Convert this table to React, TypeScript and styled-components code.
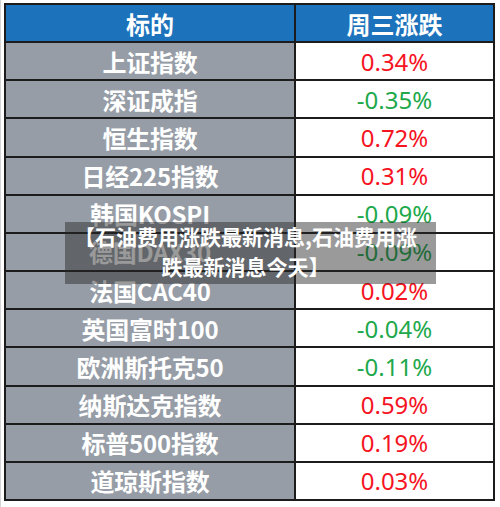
import React from "react";
import styled, { createGlobalStyle } from "styled-components";

const Global = createGlobalStyle`
  html, body { margin: 0; padding: 0; background: #ffffff; }
  body { font-family: "Noto Sans CJK SC", "Noto Sans", sans-serif; }
`;

const Page = styled.div`
  position: relative;
  width: 500px;
  height: 507px;
  padding: 3px 5px 6px 4px;
  box-sizing: border-box;
  background: #ffffff;
  border-left: 1px solid #d4d4d4;
`;

const Frame = styled.div`
  display: grid;
  grid-template-columns: 288px 1fr;
  grid-template-rows: repeat(13, 1fr);
  gap: 2px;
  padding: 2px;
  box-sizing: border-box;
  width: 491px;
  height: 498px;
  margin-left: -1px;
  background: #1c1c1c;
`;

const HeadCell = styled.div`
  background: #1d72bc;
  color: #ffffff;
  font-weight: 700;
  font-size: 24px;
  display: flex;
  align-items: center;
  justify-content: center;
`;

const NameCell = styled.div`
  background: #969da6;
  color: #ffffff;
  font-weight: 700;
  font-size: 24px;
  display: flex;
  align-items: center;
  justify-content: center;
  letter-spacing: -0.2px;
`;

const ValueCell = styled.div<{ $up: boolean }>`
  background: #ffffff;
  color: ${(p) => (p.$up ? "#f5141f" : "#20a84b")};
  font-family: "Noto Sans", "Noto Sans CJK SC", sans-serif;
  font-size: 24px;
  display: flex;
  align-items: center;
  justify-content: center;
`;

const Overlay = styled.div`
  position: absolute;
  left: 64px;
  top: 222px;
  width: 371px;
  height: 62px;
  box-sizing: border-box;
  padding-bottom: 5px;
  background: rgba(40, 40, 40, 0.47);
  color: #ffffff;
  font-weight: 700;
  font-size: 21px;
  line-height: 30px;
  text-align: center;
  display: flex;
  align-items: center;
  justify-content: center;
  white-space: nowrap;
`;

const OverlayText = styled.div`
  margin-left: -10px;
`;

const rows: { name: string; value: string }[] = [
  { name: "上证指数", value: "0.34%" },
  { name: "深证成指", value: "-0.35%" },
  { name: "恒生指数", value: "0.72%" },
  { name: "日经225指数", value: "0.31%" },
  { name: "韩国KOSPI", value: "-0.09%" },
  { name: "德国DAX30", value: "-0.09%" },
  { name: "法国CAC40", value: "0.02%" },
  { name: "英国富时100", value: "-0.04%" },
  { name: "欧洲斯托克50", value: "-0.11%" },
  { name: "纳斯达克指数", value: "0.59%" },
  { name: "标普500指数", value: "0.19%" },
  { name: "道琼斯指数", value: "0.03%" },
];

export default function App() {
  return (
    <>
      <Global />
      <Page>
        <Frame>
          <HeadCell>标的</HeadCell>
          <HeadCell>周三涨跌</HeadCell>
          {rows.map((r) => (
            <React.Fragment key={r.name}>
              <NameCell>{r.name}</NameCell>
              <ValueCell $up={!r.value.startsWith("-")}>{r.value}</ValueCell>
            </React.Fragment>
          ))}
        </Frame>
        <Overlay>
          <OverlayText>
            【石油费用涨跌最新消息,石油费用涨
            <br />
            跌最新消息今天】
          </OverlayText>
        </Overlay>
      </Page>
    </>
  );
}
